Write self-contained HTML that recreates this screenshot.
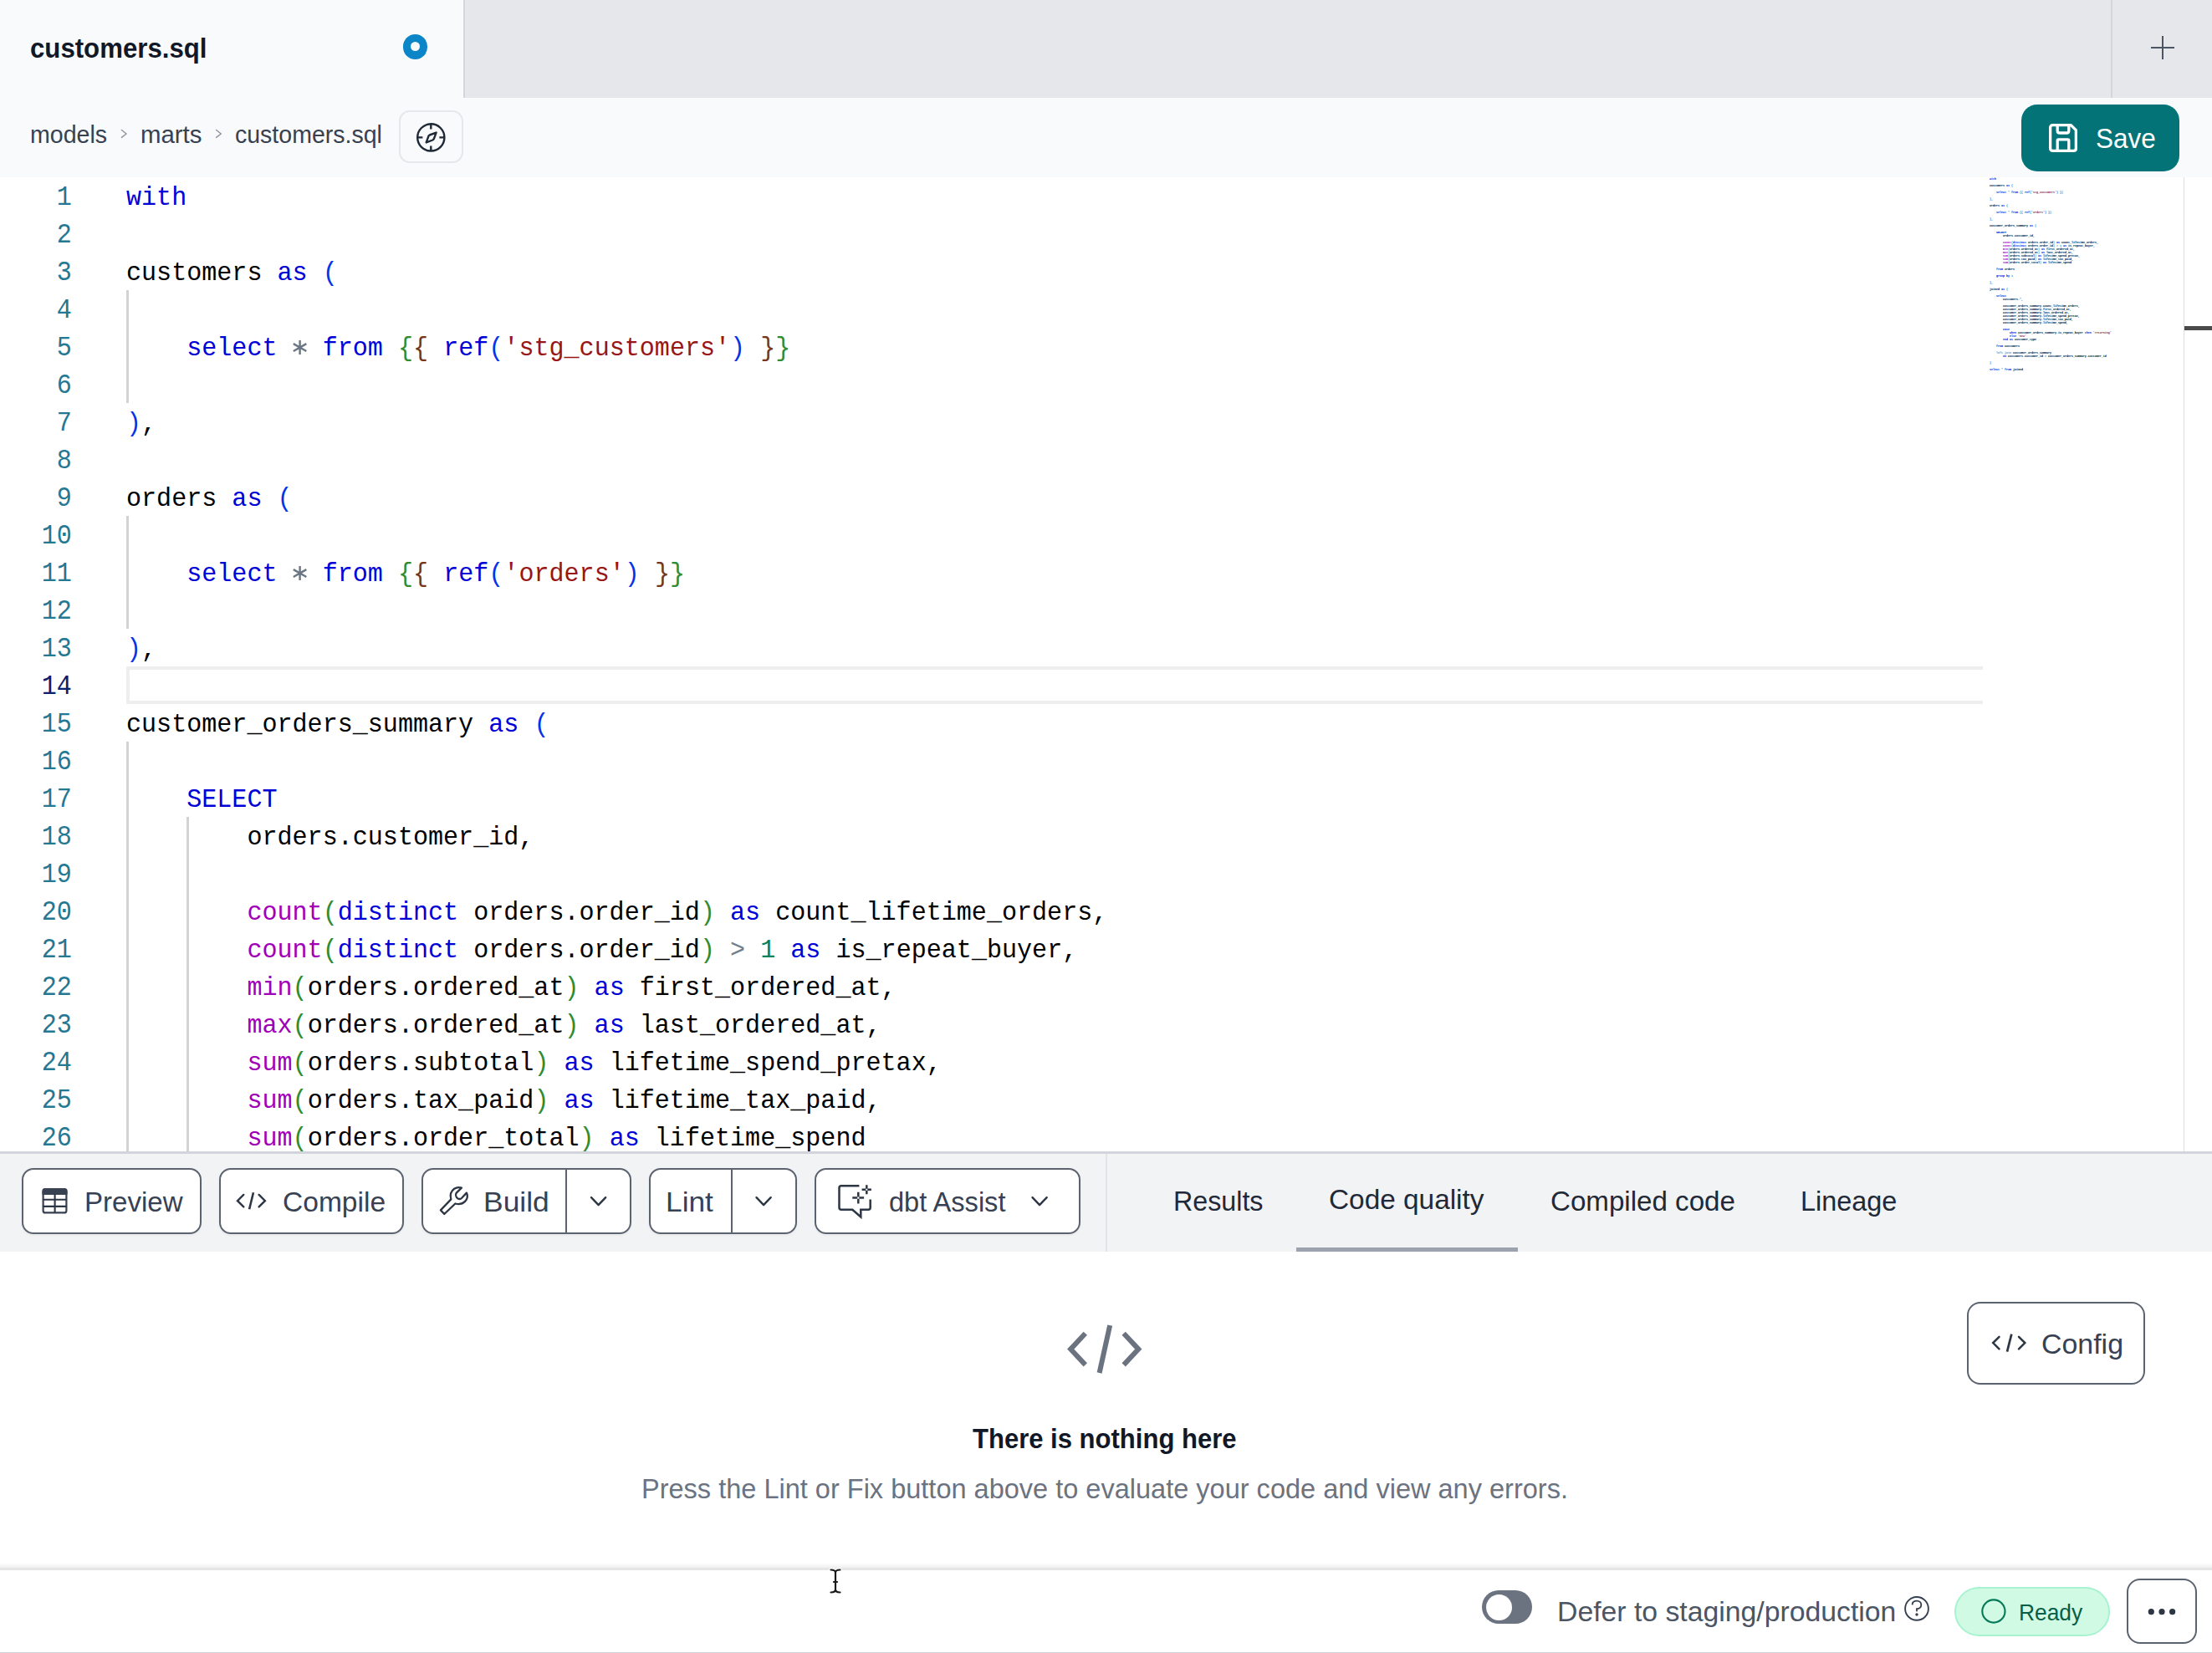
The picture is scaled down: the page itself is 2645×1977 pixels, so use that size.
<!DOCTYPE html>
<html><head><meta charset="utf-8">
<style>
*{box-sizing:border-box;margin:0;padding:0}
html,body{width:2645px;height:1977px;overflow:hidden;background:#fff;position:relative;font-family:"Liberation Sans",sans-serif}
.a{position:absolute}
.t{position:absolute;white-space:pre;line-height:1;transform-origin:0 0}
svg{position:absolute;overflow:visible}
#tabbar{left:0;top:0;width:2645px;height:117px;background:#e5e7eb}
#tab{left:0;top:0;width:554px;height:117px;background:#f9fafb}
#tabsep{left:554px;top:0;width:2px;height:117px;background:#d3d6dc}
#plussep{left:2524px;top:0;width:2px;height:117px;background:#d3d6dc}
#crumbbar{left:0;top:117px;width:2645px;height:95px;background:#f9fafb}
#compass{left:477px;top:132px;width:77px;height:63px;border:2px solid #e5e7eb;border-radius:13px}
#save{left:2417px;top:125px;width:189px;height:80px;background:#047377;border-radius:19px}
#editor{left:0;top:212px;width:2645px;height:1165px;background:#fff;overflow:hidden}
.ln{position:absolute;left:0;width:85.8px;text-align:right;font-family:"Liberation Mono",monospace;font-size:30.08px;line-height:45px;color:#237893;white-space:pre;transform-origin:0 30px;transform:scaleY(1.12)}
.ln.cur{color:#0b216f}
.cl{position:absolute;left:151px;font-family:"Liberation Mono",monospace;font-size:30.08px;line-height:45px;color:#000;white-space:pre;transform-origin:0 30px;transform:scaleY(1.06)}
.k{color:#0000d8}.b1{color:#0533e8}.b2{color:#2f8c2f}.b3{color:#76361a}.s{color:#981616}.o{color:#6f7f8f}.n{color:#098058}.f{color:#a000b8}
.guide{position:absolute;width:2.5px;background:#d3d3d3}
#curline{left:151px;top:585px;width:2220px;height:45px;border:4.8px solid #eeeeee;border-right:none}
#minimap{left:2379px;top:0;width:233px;height:1165px}
.mml{position:absolute;left:0;font-family:"Liberation Mono",monospace;font-size:3.34px;line-height:4px;height:4px;white-space:pre;color:#000;font-weight:700}
#vscroll{left:2611px;top:0;width:1px;height:1165px;background:#dddddd}
#ovcursor{left:2612px;top:178px;width:33px;height:5px;background:#4a4a4a}
#editorborder{left:0;top:1377px;width:2645px;height:3px;background:#d1d5db}
#toolbar{left:0;top:1380px;width:2645px;height:117px;background:#f2f3f5}
.btn{position:absolute;top:1397px;height:79px;background:#fff;border:2px solid #5c6370;border-radius:14px;box-shadow:0 2px 3px rgba(0,0,0,0.04)}
.bdiv{position:absolute;top:1399px;width:2px;height:75px;background:#5c6370}
#tbsep{left:1322px;top:1380px;width:2px;height:117px;background:#e2e4e8}
#uline{left:1550px;top:1492px;width:265px;height:5px;background:#9ca3af}
#config{left:2352px;top:1557px;width:213px;height:99px;background:#fff;border:2px solid #5c6370;border-radius:16px}
#footshadow{left:0;top:1869px;width:2645px;height:7px;background:linear-gradient(rgba(0,0,0,0),rgba(0,0,0,0.07))}
#footline{left:0;top:1875px;width:2645px;height:3px;background:#e6e6e7}
#bottomline{left:0;top:1976px;width:2645px;height:1px;background:#cfd2d6}
#toggle{left:1772px;top:1902px;width:60px;height:40px;border-radius:20px;background:#6b7280}
#knob{left:1776.5px;top:1906.5px;width:31px;height:31px;border-radius:50%;background:#fff}
#ready{left:2337px;top:1898px;width:186px;height:59px;border-radius:30px;background:#d1fae5;border:2px solid #a7f3d0}
#more{left:2543px;top:1888px;width:84px;height:78px;border-radius:16px;border:2px solid #5c6370;background:#fff}
</style></head><body>
<div class="a" id="tabbar"></div>
<div class="a" id="tab"></div>
<div class="a" id="tabsep"></div>
<div class="a" id="plussep"></div>
<div class="a" style="left:481.5px;top:41.1px;width:29.8px;height:29.8px;border-radius:50%;background:#0a85c8"></div>
<div class="a" style="left:490.8px;top:50.3px;width:11.2px;height:11.2px;border-radius:50%;background:#f9fafb"></div>
<div class="a" style="left:2571.8px;top:55.8px;width:28.5px;height:2.4px;background:#4b5563"></div>
<div class="a" style="left:2584.8px;top:42.8px;width:2.4px;height:28.5px;background:#4b5563"></div>

<div class="a" id="crumbbar"></div>
<svg style="left:0;top:0" width="1" height="1"><g fill="none" stroke="#8f96a0" stroke-width="1.5" stroke-linecap="round" stroke-linejoin="round">
<path d="M145.4,155.5 L151.1,160 L145.4,164.4"/><path d="M258.6,155.5 L264.3,160 L258.6,164.4"/></g></svg>
<div class="a" id="compass"></div>
<svg style="left:0;top:0" width="1" height="1"><g fill="none" stroke="#1f2937" stroke-width="2.4" stroke-linecap="butt" stroke-linejoin="round">
<circle cx="515.3" cy="164.4" r="16.1"/>
<path d="M515.3,148.3V154.6M515.3,174.4V180.5M499.2,164.4H505.4M525.4,164.4H531.5"/>
<path d="M509.7,170.4 L512.4,162.8 Q512.8,161.9 513.7,161.5 L521.6,158.6 L518.7,166.3 Q518.3,167.1 517.4,167.5 Z"/>
</g></svg>
<div class="a" id="save"></div>
<svg style="left:2449.8px;top:147.9px" width="34" height="34"><g fill="none" stroke="#fff" stroke-width="3.3" stroke-linejoin="round">
<path d="M1.65,4.6 Q1.65,1.65 4.6,1.65 H26.3 L32.35,7.7 V29.4 Q32.35,32.35 29.4,32.35 H4.6 Q1.65,32.35 1.65,29.4 Z"/>
<path d="M10.2,1.65 V8.4 Q10.2,11 12.8,11 H21.2 Q23.8,11 23.8,8.4 V1.65"/>
<path d="M10.2,32.35 V20 Q10.2,18.9 11.3,18.9 H22.7 Q23.8,18.9 23.8,20 V32.35"/>
</g></svg>

<div class="a" id="editor">
<div class="a" id="curline"></div>
<div class="guide" style="left:151px;top:135px;height:135px"></div>
<div class="guide" style="left:151px;top:405px;height:135px"></div>
<div class="guide" style="left:151px;top:675px;height:495px"></div>
<div class="guide" style="left:223px;top:765px;height:405px"></div>
<div class="ln" style="top:3.4px">1</div>
<div class="ln" style="top:48.4px">2</div>
<div class="ln" style="top:93.4px">3</div>
<div class="ln" style="top:138.4px">4</div>
<div class="ln" style="top:183.4px">5</div>
<div class="ln" style="top:228.4px">6</div>
<div class="ln" style="top:273.4px">7</div>
<div class="ln" style="top:318.4px">8</div>
<div class="ln" style="top:363.4px">9</div>
<div class="ln" style="top:408.4px">10</div>
<div class="ln" style="top:453.4px">11</div>
<div class="ln" style="top:498.4px">12</div>
<div class="ln" style="top:543.4px">13</div>
<div class="ln cur" style="top:588.4px">14</div>
<div class="ln" style="top:633.4px">15</div>
<div class="ln" style="top:678.4px">16</div>
<div class="ln" style="top:723.4px">17</div>
<div class="ln" style="top:768.4px">18</div>
<div class="ln" style="top:813.4px">19</div>
<div class="ln" style="top:858.4px">20</div>
<div class="ln" style="top:903.4px">21</div>
<div class="ln" style="top:948.4px">22</div>
<div class="ln" style="top:993.4px">23</div>
<div class="ln" style="top:1038.4px">24</div>
<div class="ln" style="top:1083.4px">25</div>
<div class="ln" style="top:1128.4px">26</div>
<div class="cl" style="top:3.4px"><span class="k">with</span></div>
<div class="cl" style="top:93.4px">customers <span class="k">as</span> <span class="b1">(</span></div>
<div class="cl" style="top:183.4px">    <span class="k">select</span>   <span class="k">from</span> <span class="b2">{</span><span class="b3">{</span> <span class="k">ref</span><span class="b1">(</span><span class="s">&#x27;stg_customers&#x27;</span><span class="b1">)</span> <span class="b3">}</span><span class="b2">}</span></div>
<div class="cl" style="top:273.4px"><span class="b1">)</span>,</div>
<div class="cl" style="top:363.4px">orders <span class="k">as</span> <span class="b1">(</span></div>
<div class="cl" style="top:453.4px">    <span class="k">select</span>   <span class="k">from</span> <span class="b2">{</span><span class="b3">{</span> <span class="k">ref</span><span class="b1">(</span><span class="s">&#x27;orders&#x27;</span><span class="b1">)</span> <span class="b3">}</span><span class="b2">}</span></div>
<div class="cl" style="top:543.4px"><span class="b1">)</span>,</div>
<div class="cl" style="top:633.4px">customer_orders_summary <span class="k">as</span> <span class="b1">(</span></div>
<div class="cl" style="top:723.4px">    <span class="k">SELECT</span></div>
<div class="cl" style="top:768.4px">        orders.customer_id,</div>
<div class="cl" style="top:858.4px">        <span class="f">count</span><span class="b2">(</span><span class="k">distinct</span> orders.order_id<span class="b2">)</span> <span class="k">as</span> count_lifetime_orders,</div>
<div class="cl" style="top:903.4px">        <span class="f">count</span><span class="b2">(</span><span class="k">distinct</span> orders.order_id<span class="b2">)</span> <span class="o">&gt;</span> <span class="n">1</span> <span class="k">as</span> is_repeat_buyer,</div>
<div class="cl" style="top:948.4px">        <span class="f">min</span><span class="b2">(</span>orders.ordered_at<span class="b2">)</span> <span class="k">as</span> first_ordered_at,</div>
<div class="cl" style="top:993.4px">        <span class="f">max</span><span class="b2">(</span>orders.ordered_at<span class="b2">)</span> <span class="k">as</span> last_ordered_at,</div>
<div class="cl" style="top:1038.4px">        <span class="f">sum</span><span class="b2">(</span>orders.subtotal<span class="b2">)</span> <span class="k">as</span> lifetime_spend_pretax,</div>
<div class="cl" style="top:1083.4px">        <span class="f">sum</span><span class="b2">(</span>orders.tax_paid<span class="b2">)</span> <span class="k">as</span> lifetime_tax_paid,</div>
<div class="cl" style="top:1128.4px">        <span class="f">sum</span><span class="b2">(</span>orders.order_total<span class="b2">)</span> <span class="k">as</span> lifetime_spend</div>
<div class="a" id="minimap"><div class="mml" style="top:0px"><span class="k">with</span></div><div class="mml" style="top:8px">customers <span class="k">as</span> <span class="b1">(</span></div><div class="mml" style="top:16px">    <span class="k">select</span> <span class="o">*</span> <span class="k">from</span> <span class="b2">{</span><span class="b3">{</span> <span class="k">ref</span><span class="b1">(</span><span class="s">&#x27;stg_customers&#x27;</span><span class="b1">)</span> <span class="b3">}</span><span class="b2">}</span></div><div class="mml" style="top:24px"><span class="b1">)</span>,</div><div class="mml" style="top:32px">orders <span class="k">as</span> <span class="b1">(</span></div><div class="mml" style="top:40px">    <span class="k">select</span> <span class="o">*</span> <span class="k">from</span> <span class="b2">{</span><span class="b3">{</span> <span class="k">ref</span><span class="b1">(</span><span class="s">&#x27;orders&#x27;</span><span class="b1">)</span> <span class="b3">}</span><span class="b2">}</span></div><div class="mml" style="top:48px"><span class="b1">)</span>,</div><div class="mml" style="top:56px">customer_orders_summary <span class="k">as</span> <span class="b1">(</span></div><div class="mml" style="top:64px">    <span class="k">SELECT</span></div><div class="mml" style="top:68px">        orders.customer_id,</div><div class="mml" style="top:76px">        <span class="f">count</span><span class="b2">(</span><span class="k">distinct</span> orders.order_id<span class="b2">)</span> <span class="k">as</span> count_lifetime_orders,</div><div class="mml" style="top:80px">        <span class="f">count</span><span class="b2">(</span><span class="k">distinct</span> orders.order_id<span class="b2">)</span> <span class="o">&gt;</span> <span class="n">1</span> <span class="k">as</span> is_repeat_buyer,</div><div class="mml" style="top:84px">        <span class="f">min</span><span class="b2">(</span>orders.ordered_at<span class="b2">)</span> <span class="k">as</span> first_ordered_at,</div><div class="mml" style="top:88px">        <span class="f">max</span><span class="b2">(</span>orders.ordered_at<span class="b2">)</span> <span class="k">as</span> last_ordered_at,</div><div class="mml" style="top:92px">        <span class="f">sum</span><span class="b2">(</span>orders.subtotal<span class="b2">)</span> <span class="k">as</span> lifetime_spend_pretax,</div><div class="mml" style="top:96px">        <span class="f">sum</span><span class="b2">(</span>orders.tax_paid<span class="b2">)</span> <span class="k">as</span> lifetime_tax_paid,</div><div class="mml" style="top:100px">        <span class="f">sum</span><span class="b2">(</span>orders.order_total<span class="b2">)</span> <span class="k">as</span> lifetime_spend</div><div class="mml" style="top:108px">    <span class="k">from</span> orders</div><div class="mml" style="top:116px">    <span class="k">group</span> <span class="k">by</span> <span class="n">1</span></div><div class="mml" style="top:124px"><span class="b1">)</span>,</div><div class="mml" style="top:132px">joined <span class="k">as</span> <span class="b1">(</span></div><div class="mml" style="top:140px">    <span class="k">select</span></div><div class="mml" style="top:144px">        customers.<span class="o">*</span>,</div><div class="mml" style="top:152px">        customer_orders_summary.count_lifetime_orders,</div><div class="mml" style="top:156px">        customer_orders_summary.first_ordered_at,</div><div class="mml" style="top:160px">        customer_orders_summary.last_ordered_at,</div><div class="mml" style="top:164px">        customer_orders_summary.lifetime_spend_pretax,</div><div class="mml" style="top:168px">        customer_orders_summary.lifetime_tax_paid,</div><div class="mml" style="top:172px">        customer_orders_summary.lifetime_spend,</div><div class="mml" style="top:180px">        <span class="k">case</span></div><div class="mml" style="top:184px">            <span class="k">when</span> customer_orders_summary.is_repeat_buyer <span class="k">then</span> <span class="s">&#x27;returning&#x27;</span></div><div class="mml" style="top:188px">            <span class="k">else</span> <span class="s">&#x27;new&#x27;</span></div><div class="mml" style="top:192px">        <span class="k">end</span> <span class="k">as</span> customer_type</div><div class="mml" style="top:200px">    <span class="k">from</span> customers</div><div class="mml" style="top:208px">    <span class="o">left join</span> customer_orders_summary</div><div class="mml" style="top:212px">        <span class="k">on</span> customers.customer_id <span class="o">=</span> customer_orders_summary.customer_id</div><div class="mml" style="top:220px"><span class="b1">)</span></div><div class="mml" style="top:228px"><span class="k">select</span> <span class="o">*</span> <span class="k">from</span> joined</div></div>
<svg style="left:0;top:0" width="1" height="1"><g stroke="#6a7683" stroke-width="2.4" stroke-linecap="butt"><path d="M358.60,195.10V212.10M350.85,199.15L366.35,208.05M350.85,208.05L366.35,199.15"/></g></svg>
<svg style="left:0;top:0" width="1" height="1"><g stroke="#6a7683" stroke-width="2.4" stroke-linecap="butt"><path d="M358.60,465.10V482.10M350.85,469.15L366.35,478.05M350.85,478.05L366.35,469.15"/></g></svg>
<div class="a" id="vscroll"></div><div class="a" id="ovcursor"></div>
</div>
<div class="a" id="editorborder"></div>

<div class="a" id="toolbar"></div>
<div class="btn" style="left:26px;width:215px"></div>
<div class="btn" style="left:261.5px;width:221px"></div>
<div class="btn" style="left:503.5px;width:251px"></div>
<div class="bdiv" style="left:676px"></div>
<div class="btn" style="left:775.5px;width:177px"></div>
<div class="bdiv" style="left:874px"></div>
<div class="btn" style="left:973.5px;width:318.5px"></div>
<div class="a" id="tbsep"></div>
<div class="a" id="uline"></div>
<!-- table icon -->
<svg style="left:0;top:0" width="1" height="1">
<rect x="51.6" y="1422.3" width="27.8" height="28.1" rx="2.5" fill="none" stroke="#374151" stroke-width="2.2"/>
<rect x="50.6" y="1421.3" width="29.8" height="7.6" rx="2.5" fill="#374151"/>
<rect x="50.6" y="1425" width="29.8" height="3.9" fill="#374151"/>
<path d="M65.6,1428 V1450.4 M51.6,1434.8 H79.4 M51.6,1442.9 H79.4" stroke="#2d3644" stroke-width="2.1" fill="none"/>
</svg>
<!-- compile icon -->
<svg style="left:0;top:0" width="1" height="1"><g fill="none" stroke="#2d3644" stroke-width="2.4" stroke-linecap="round" stroke-linejoin="miter">
<path d="M291.3,1428.9 L284,1436.2 L291.3,1443.4"/><path d="M309.6,1428.9 L316.9,1436.2 L309.6,1443.4"/>
<path d="M303,1426.2 L298.1,1446.2" stroke-linecap="butt" stroke-width="2.6"/></g></svg>
<!-- wrench -->
<svg style="left:520px;top:1410px" width="50" height="50"><path fill="none" stroke="#2d3644" stroke-width="2.3" stroke-linejoin="round"
 d="M6.9,37.4 L19.3,24.4 C18,19.5 19.2,14.7 23.2,11.8 C25.8,10 29,9.7 31.9,10.6 L25.6,16.9 C24.6,18.8 25.2,21.7 27.2,23.2 C28.9,24.3 30.9,24.1 32.2,22.8 L37.9,16.6 C39.4,19.8 39,24 36.1,26.9 C33.2,29.8 28.6,30.6 24.4,29.5 L11.3,42 Z"/></svg>
<!-- chevrons -->
<svg style="left:0;top:0" width="1" height="1"><g fill="none" stroke="#2d3644" stroke-width="2.4" stroke-linecap="round" stroke-linejoin="round">
<path d="M707,1432.2 L715.6,1441.2 L724.2,1432.2"/>
<path d="M904.5,1432.2 L913.1,1441.2 L921.7,1432.2"/>
<path d="M1234.5,1432.2 L1243.1,1441.2 L1251.7,1432.2"/>
</g></svg>
<!-- dbt assist icon -->
<svg style="left:0;top:0" width="1" height="1"><g fill="none" stroke="#2d3644" stroke-width="2.5" stroke-linejoin="miter">
<path d="M1027.4,1418.3 H1006 Q1003.5,1418.3 1003.5,1420.8 V1444.3 Q1003.5,1446.8 1006,1446.8 H1019.3 L1029.3,1455.5 V1446.8 H1038.2 Q1040.7,1446.8 1040.7,1444.3 V1434.6"/>
<path d="M1026.3,1425.8 V1431.5 M1026.3,1433.7 V1439.6 M1019.3,1432.6 H1025.2 M1027.4,1432.6 H1033.1"/>
<path d="M1036.3,1417.2 V1421.8 M1036.3,1423.8 V1428.3 M1030.6,1422.8 H1035.3 M1037.3,1422.8 H1041.9"/>
</g></svg>

<!-- content -->
<div class="a" id="config"></div>
<svg style="left:0;top:0" width="1" height="1"><g fill="none" stroke="#2d3644" stroke-width="2.5" stroke-linecap="round">
<path d="M2390.5,1598.8 L2383.2,1606.1 L2390.5,1613.4"/><path d="M2414,1598.8 L2421.3,1606.1 L2414,1613.4"/>
<path d="M2405.3,1595.6 L2400,1616.6" stroke-linecap="butt" stroke-width="2.7"/></g></svg>
<svg style="left:0;top:0" width="1" height="1"><g fill="none" stroke="#6b7280" stroke-width="6" stroke-linecap="butt" stroke-linejoin="miter">
<path d="M1297.8,1594.8 L1280.2,1613.6 L1297.8,1632.4"/><path d="M1343.7,1594.8 L1361.3,1613.6 L1343.7,1632.4"/>
<path d="M1327.2,1585.2 L1314.6,1642"/></g></svg>

<div class="a" id="footshadow"></div>
<div class="a" id="footline"></div>
<div class="a" id="bottomline"></div>
<div class="a" id="toggle"></div>
<div class="a" id="knob"></div>
<svg style="left:0;top:0" width="1" height="1"><g fill="none" stroke="#374151" stroke-width="1.9" stroke-linecap="round">
<circle cx="2292" cy="1923.9" r="13.9"/>
<path d="M2286.7,1918.6 C2287,1915.8 2289.3,1914.6 2292,1914.6 C2295,1914.6 2297.3,1916.6 2297.3,1919.3 C2297.3,1922.3 2295,1924.3 2292,1924.3 V1926.6"/>
</g><circle cx="2292" cy="1930.9" r="1.75" fill="#374151"/></svg>
<div class="a" id="ready"></div>
<svg style="left:0;top:0" width="1" height="1"><circle cx="2383.9" cy="1927" r="13.6" fill="none" stroke="#047857" stroke-width="2.1"/></svg>
<div class="a" id="more"></div>
<svg style="left:0;top:0" width="1" height="1"><g fill="#2d3644"><circle cx="2572.3" cy="1927.7" r="3.6"/><circle cx="2585" cy="1927.7" r="3.6"/><circle cx="2597.6" cy="1927.7" r="3.6"/></g></svg>
<!-- I-beam cursor -->
<svg style="left:0;top:0" width="1" height="1"><g fill="none" stroke="#fff" stroke-width="4.5" stroke-linecap="round"><path d="M993.5,1877.5 Q999,1877.5 999,1881 Q999,1877.5 1004.5,1877.5 M999,1881 V1901 M993.5,1904.5 Q999,1904.5 999,1901 Q999,1904.5 1004.5,1904.5 M997,1892 H1001"/></g>
<g fill="none" stroke="#1a1a1a" stroke-width="2.2" stroke-linecap="round"><path d="M993.5,1877.5 Q999,1877.5 999,1881 Q999,1877.5 1004.5,1877.5 M999,1881 V1901 M993.5,1904.5 Q999,1904.5 999,1901 Q999,1904.5 1004.5,1904.5 M997,1892 H1001"/></g></svg>

<div class="t" style="left:35.88px;top:40.00px;font-size:34px;font-weight:700;color:#111827;transform:scaleX(0.9172);">customers.sql</div>
<div class="t" style="left:35.80px;top:146.00px;font-size:30px;font-weight:400;color:#374151;transform:scaleX(0.9521);">models</div>
<div class="t" style="left:168.04px;top:146.00px;font-size:30px;font-weight:400;color:#374151;transform:scaleX(0.9792);">marts</div>
<div class="t" style="left:281.05px;top:146.00px;font-size:30px;font-weight:400;color:#374151;transform:scaleX(0.9505);">customers.sql</div>
<div class="t" style="left:2505.65px;top:148.40px;font-size:34px;font-weight:400;color:#ffffff;transform:scaleX(0.9257);">Save</div>
<div class="t" style="left:101.49px;top:1421.00px;font-size:33px;font-weight:400;color:#374151;transform:scaleX(1.0022);">Preview</div>
<div class="t" style="left:337.97px;top:1421.00px;font-size:33px;font-weight:400;color:#374151;transform:scaleX(1.0169);">Compile</div>
<div class="t" style="left:577.78px;top:1421.00px;font-size:33px;font-weight:400;color:#374151;transform:scaleX(1.0735);">Build</div>
<div class="t" style="left:796.29px;top:1421.00px;font-size:33px;font-weight:400;color:#374151;transform:scaleX(1.0700);">Lint</div>
<div class="t" style="left:1062.76px;top:1421.00px;font-size:33px;font-weight:400;color:#374151;transform:scaleX(0.9875);">dbt Assist</div>
<div class="t" style="left:1403.07px;top:1420.00px;font-size:33px;font-weight:400;color:#1f2937;transform:scaleX(0.9764);">Results</div>
<div class="t" style="left:1588.98px;top:1418.00px;font-size:33px;font-weight:400;color:#1f2937;transform:scaleX(1.0110);">Code quality</div>
<div class="t" style="left:1853.99px;top:1420.00px;font-size:33px;font-weight:400;color:#1f2937;transform:scaleX(1.0035);">Compiled code</div>
<div class="t" style="left:2153.05px;top:1420.00px;font-size:33px;font-weight:400;color:#1f2937;transform:scaleX(0.9823);">Lineage</div>
<div class="t" style="left:2440.95px;top:1590.75px;font-size:33px;font-weight:400;color:#374151;transform:scaleX(1.0275);">Config</div>
<div class="t" style="left:1163.00px;top:1704.00px;font-size:33px;font-weight:700;color:#111827;transform:scaleX(0.9403);">There is nothing here</div>
<div class="t" style="left:766.54px;top:1763.75px;font-size:33px;font-weight:400;color:#6b7280;transform:scaleX(0.9853);">Press the Lint or Fix button above to evaluate your code and view any errors.</div>
<div class="t" style="left:1861.93px;top:1910.70px;font-size:33px;font-weight:400;color:#4b5563;transform:scaleX(1.0230);">Defer to staging/production</div>
<div class="t" style="left:2414.15px;top:1913.60px;font-size:28.5px;font-weight:400;color:#065f46;transform:scaleX(0.9250);">Ready</div>
</body></html>
